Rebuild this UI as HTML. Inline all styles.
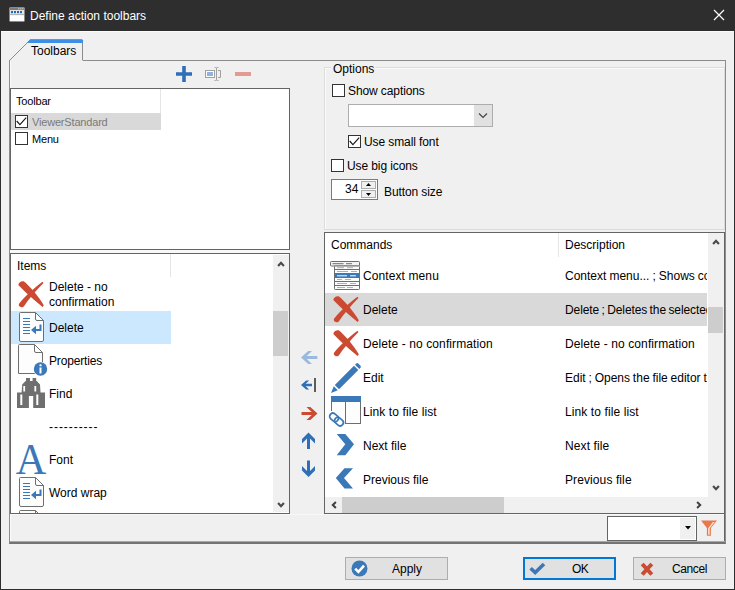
<!DOCTYPE html>
<html><head><meta charset="utf-8"><title>Define action toolbars</title>
<style>
html,body{margin:0;padding:0;}
body{width:735px;height:590px;overflow:hidden;background:#f0f0f0;font-family:"Liberation Sans",sans-serif;font-size:12px;color:#000;position:relative;}
div,span,svg{position:absolute;box-sizing:border-box;}
svg{overflow:visible;}
.t{white-space:nowrap;line-height:14px;height:14px;}
.cb{width:13px;height:13px;border:1px solid #333;background:#fff;}
.clip{overflow:hidden;}
</style></head><body>
<div style="left:0px;top:0px;width:735px;height:590px;background:transparent;border:1px solid #2e2e2e;border-top:0;"></div>
<div style="left:0px;top:0px;width:735px;height:31px;background:#2e2e2e;"></div>
<div style="left:1px;top:31px;width:733px;height:1px;background:#fafafa;"></div>
<svg style="left:9px;top:7px" width="16" height="15" viewBox="0 0 16 15"><rect x="0.500" y="0.500" width="15" height="14" rx="1" fill="#fdfdfd" stroke="#8a8a8a"/><rect x="1" y="1" width="14" height="2" fill="#7c7c7c"/><rect x="9.300" y="1.300" width="1" height="1" fill="#eee"/><rect x="11.300" y="1.300" width="1" height="1" fill="#eee"/><rect x="13.300" y="1.300" width="1" height="1" fill="#eee"/><rect x="1" y="3" width="14" height="4.500" fill="#e6e6e6"/><rect x="2" y="4" width="2" height="2.200" fill="#1e6cc0"/><rect x="5" y="4" width="2" height="2.200" fill="#1e6cc0"/><rect x="8" y="4" width="2" height="2.200" fill="#1e6cc0"/><rect x="11" y="4" width="2" height="2.200" fill="#1e6cc0"/><rect x="1" y="7.300" width="14" height="0.800" fill="#9a9a9a"/></svg>
<span class="t" style="left:30px;top:9px;color:#fff;">Define action toolbars</span>
<svg style="left:713px;top:9px" width="12" height="12" viewBox="0 0 12 12"><path d="M1 1L11 11M11 1L1 11" stroke="#fff" stroke-width="1.200" fill="none"/></svg>
<div style="left:9px;top:60px;width:717px;height:484px;background:transparent;border:1px solid #8c8c8c;border-bottom:2px solid #747474;"></div>
<div style="left:724px;top:514px;width:1px;height:28px;background:#646464;"></div>
<div style="left:10px;top:541px;width:715px;height:1px;background:#a8a8a8;"></div>
<div style="left:10px;top:61px;width:1px;height:480px;background:#fcfcfc;"></div>
<svg style="left:9px;top:38px" width="80" height="24" viewBox="0 0 80 24"><path d="M0.500 22.500 L21 2 L73.500 2 L73.500 22.500" fill="#f0f0f0" stroke="#8c8c8c"/><rect x="1" y="22" width="72.500" height="2" fill="#f0f0f0"/><rect x="0" y="22" width="1" height="2" fill="#8c8c8c"/><path d="M21.200 1.300 L72.800 1.300 L74 2.500 L74 4.900 L17.700 4.900 Z" fill="#3c8ee6"/></svg>
<span class="t" style="left:31px;top:44px;">Toolbars</span>
<svg style="left:176px;top:66px" width="16" height="16" viewBox="0 0 16 16"><path d="M6.200 0h3.600v6.200H16v3.600H9.800V16H6.200V9.800H0V6.200h6.200z" fill="#2e6fb7"/></svg>
<svg style="left:205px;top:67px" width="17" height="14" viewBox="0 0 17 14"><rect x="0.500" y="3.500" width="9" height="7" fill="#fff" stroke="#a0a0a0"/><rect x="2" y="5" width="6" height="4" fill="#8fb3dc"/><path d="M9.500 0.500h1q1 0 1 1v11q0 1 -1 1h-1M13.500 0.500h-1q-1 0 -1 1v11q0 1 1 1h1" stroke="#a0a0a0" fill="none"/><path d="M13 3.500h2.500v7H13" stroke="#a0a0a0" fill="none"/></svg>
<div style="left:235px;top:72px;width:16px;height:4px;background:#e19b90;"></div>
<div style="left:10px;top:88px;width:280px;height:162px;background:#fff;border:1px solid #646464;"></div>
<div style="left:11px;top:250px;width:278px;height:3px;background:#f8f8f8;"></div>
<div style="left:160px;top:89px;width:1px;height:24px;background:#e5e5e5;"></div>
<span class="t" style="left:16px;top:94px;font-size:11px;letter-spacing:-0.18px;">Toolbar</span>
<div style="left:11px;top:113px;width:150px;height:17px;background:#d9d9d9;"></div>
<div class="cb" style="left:15px;top:115px;"></div><svg style="left:15px;top:115px" width="13" height="13" viewBox="0 0 13 13"><path d="M1.700 6L4.900 9.700L11.200 2.600" stroke="#1a1a1a" stroke-width="1.200" fill="none"/></svg>
<span class="t" style="left:32px;top:115px;font-size:11px;color:#7a7a7a;letter-spacing:-0.18px;">ViewerStandard</span>
<div class="cb" style="left:15px;top:132px;"></div>
<span class="t" style="left:32px;top:132px;font-size:11px;letter-spacing:-0.18px;">Menu</span>
<div style="left:10px;top:253px;width:280px;height:261px;background:#fff;border:1px solid #646464;"></div>
<div style="left:170px;top:254px;width:1px;height:23px;background:#e5e5e5;"></div>
<span class="t" style="left:17px;top:259px;">Items</span>
<div style="left:11px;top:311px;width:160px;height:33px;background:#cce8ff;"></div>
<svg style="left:18px;top:281px" width="27" height="27" viewBox="0 0 27 27"><path d="M0.300 3.900 C0.400 1.500 3.500 -0.300 5.700 0.300 C11 4.500 20.500 15 25.800 24.300 L24.600 26 C18 20.500 6.500 10.500 0.300 3.900 Z" fill="#cb4a32"/><path d="M24.500 0.800 L25.500 2.100 C18.500 9 11 18 6.200 25 C5.200 26.500 3 26.600 1.700 25.600 C0.600 24.600 0.600 23.200 1.200 22.400 C7 15.500 15.500 7.500 24.500 0.800 Z" fill="#cb4a32"/></svg>
<svg style="left:19px;top:312px" width="25" height="30" viewBox="0 0 25 30"><path d="M1.500 0.500 H16.500 L24.500 8.500 V28 Q24.500 29.500 23 29.500 H2 Q0.500 29.500 0.500 28 V1.500 Q0.500 0.500 1.500 0.500 Z" fill="#fdfdfd" stroke="#6e6e6e"/><path d="M16.500 0.500 V7 Q16.500 8.500 18 8.500 H24.500" fill="none" stroke="#6e6e6e"/><path d="M4 6.500h7M4 9.500h7M4 12.500h7M4 15.500h7M4 18.500h7M4 21.500h7" stroke="#3b78b8" stroke-width="1.100"/><path d="M21.500 12.500 V18 H14.500" fill="none" stroke="#3b78b8" stroke-width="2"/><path d="M12 18 L17 13.800 V22.200 Z" fill="#3b78b8"/></svg>
<svg style="left:18px;top:344px" width="32" height="32" viewBox="0 0 32 32"><path d="M1.500 0.500 H16.500 L24.500 8.500 V29.500 H0.500 V1.500 Q0.500 0.500 1.500 0.500 Z" fill="#fdfdfd" stroke="#6e6e6e"/><path d="M16.500 0.500 V7 Q16.500 8.500 18 8.500 H24.500" fill="none" stroke="#6e6e6e"/><circle cx="22.500" cy="25" r="7.300" fill="#fff"/><circle cx="22.500" cy="25" r="6.700" fill="#3b78b8"/><rect x="21.500" y="23.500" width="2" height="6" fill="#fff"/><rect x="21.500" y="20.300" width="2" height="2" fill="#fff"/></svg>
<svg style="left:17px;top:378px" width="28" height="30" viewBox="0 0 28 30"><path d="M9 0h4v3h2.600v-3h3.600v3h0.500L23 6.500L23.500 14.500H28V30H16.200V18h-4.300V30H0V14.500h4.600L5.200 6.500L8.600 3h0.400z" fill="#6f6f6f"/><rect x="3.300" y="16.500" width="2" height="10.500" fill="#fff"/><rect x="19.300" y="16.500" width="2" height="10.500" fill="#fff"/><rect x="6.300" y="8" width="1.800" height="5.500" fill="#fff"/><rect x="17.400" y="8" width="1.800" height="5.500" fill="#fff"/></svg>
<svg style="left:11px;top:439px" width="42" height="40" viewBox="0 0 42 40"><text transform="translate(20 35) scale(0.94 1)" text-anchor="middle" font-family="Liberation Serif, serif" font-size="45" fill="#3b78b8">A</text></svg>
<svg style="left:19px;top:477px" width="25" height="30" viewBox="0 0 25 30"><path d="M1.500 0.500 H16.500 L24.500 8.500 V28 Q24.500 29.500 23 29.500 H2 Q0.500 29.500 0.500 28 V1.500 Q0.500 0.500 1.500 0.500 Z" fill="#fdfdfd" stroke="#6e6e6e"/><path d="M16.500 0.500 V7 Q16.500 8.500 18 8.500 H24.500" fill="none" stroke="#6e6e6e"/><path d="M4 6.500h7M4 9.500h7M4 12.500h7M4 15.500h7M4 18.500h7M4 21.500h7" stroke="#3b78b8" stroke-width="1.100"/><path d="M21.500 12.500 V18 H14.500" fill="none" stroke="#3b78b8" stroke-width="2"/><path d="M12 18 L17 13.800 V22.200 Z" fill="#3b78b8"/></svg>
<div class="clip" style="left:11px;top:505px;width:60px;height:8px;"><svg style="left:8px;top:5px" width="25" height="30" viewBox="0 0 25 30"><path d="M1.500 0.500 H16.500 L24.500 8.500 V28 Q24.500 29.500 23 29.500 H2 Q0.500 29.500 0.500 28 V1.500 Q0.500 0.500 1.500 0.500 Z" fill="#fdfdfd" stroke="#6e6e6e"/><path d="M16.500 0.500 V7 Q16.500 8.500 18 8.500 H24.500" fill="none" stroke="#6e6e6e"/><path d="M4 6.500h7M4 9.500h7M4 12.500h7M4 15.500h7M4 18.500h7M4 21.500h7" stroke="#3b78b8" stroke-width="1.100"/><path d="M21.500 12.500 V18 H14.500" fill="none" stroke="#3b78b8" stroke-width="2"/><path d="M12 18 L17 13.800 V22.200 Z" fill="#3b78b8"/></svg></div>
<span class="t" style="left:49px;top:280px;">Delete - no</span>
<span class="t" style="left:49px;top:295px;">confirmation</span>
<span class="t" style="left:49px;top:321px;">Delete</span>
<span class="t" style="left:49px;top:354px;letter-spacing:-0.15px;">Properties</span>
<span class="t" style="left:49px;top:387px;">Find</span>
<span class="t" style="left:49px;top:420px;letter-spacing:0.95px;">----------</span>
<span class="t" style="left:49px;top:453px;">Font</span>
<span class="t" style="left:49px;top:486px;">Word wrap</span>
<div style="left:273px;top:255px;width:16px;height:257px;background:#f0f0f0;"></div>
<div style="left:273px;top:311px;width:15px;height:45px;background:#cdcdcd;"></div>
<svg style="left:274.5px;top:257.5px" width="12" height="12" viewBox="-6 -6 12 12"><path d="M-2.900 1.900L0 -1.200L2.900 1.900" fill="none" stroke="#4a4a4a" stroke-width="2.2"/></svg>
<svg style="left:274.5px;top:499px" width="12" height="12" viewBox="-6 -6 12 12"><path d="M-2.900 -1.900L0 1.200L2.900 -1.900" fill="none" stroke="#4a4a4a" stroke-width="2.2"/></svg>
<svg style="left:301px;top:350px" width="17" height="15" viewBox="0 0 17 15"><path d="M0 7.500L7.200 1H11L5.800 5.900H16.300V9.100H5.800L11 14H7.200Z" fill="#9bb9dc"/></svg>
<svg style="left:301px;top:377px" width="17" height="16" viewBox="0 0 17 16"><path d="M0 8L5.200 3.500H8.200L4.600 6.800H11V9.200H4.600L8.200 12.500H5.200Z" fill="#2e6fb7"/><rect x="13" y="1" width="2" height="14" fill="#5c5c5c"/></svg>
<svg style="left:301px;top:406px" width="17" height="15" viewBox="0 0 17 15"><path d="M16.500 7.500L9.300 1H5.500L10.700 5.900H0.500V9.100H10.700L5.500 14H9.300Z" fill="#cb4a32"/></svg>
<svg style="left:301px;top:432px" width="15" height="18" viewBox="0 0 15 18"><path d="M7.500 0.500L14 7V11.500L9 6.500V17H6V6.500L1 11.500V7Z" fill="#2e6fb7"/></svg>
<svg style="left:301px;top:460px" width="15" height="18" viewBox="0 0 15 18"><path d="M7.500 17L14 10.500V6L9 11V0.500H6V11L1 6V10.500Z" fill="#2e6fb7"/></svg>
<div style="left:324px;top:67px;width:401px;height:163px;background:transparent;border:1px solid #dcdcdc;"></div>
<div style="left:325px;top:68px;width:399px;height:161px;background:transparent;border:1px solid #fbfbfb;border-right:0;border-bottom:0;"></div>
<span class="t" style="left:331px;top:62px;background:#f0f0f0;padding:0 2px;">Options</span>
<div class="cb" style="left:332px;top:84px;"></div>
<span class="t" style="left:348px;top:84px;letter-spacing:-0.1px;">Show captions</span>
<div style="left:348px;top:104px;width:145px;height:23px;background:#fff;border:1px solid #adadad;"></div>
<div style="left:474px;top:105px;width:18px;height:21px;background:#e1e1e1;"></div>
<svg style="left:478px;top:112px" width="10" height="7" viewBox="0 0 10 7"><path d="M1 1.500L5 5.500L9 1.500" fill="none" stroke="#404040" stroke-width="1.100"/></svg>
<div class="cb" style="left:348px;top:135px;"></div><svg style="left:348px;top:135px" width="13" height="13" viewBox="0 0 13 13"><path d="M1.700 6L4.900 9.700L11.200 2.600" stroke="#1a1a1a" stroke-width="1.200" fill="none"/></svg>
<span class="t" style="left:364px;top:135px;letter-spacing:-0.1px;">Use small font</span>
<div class="cb" style="left:331px;top:159px;"></div>
<span class="t" style="left:347px;top:159px;letter-spacing:-0.1px;">Use big icons</span>
<div style="left:331px;top:179px;width:47px;height:21px;background:#fff;border:1px solid #7a7a7a;"></div>
<span class="t" style="left:345px;top:182px;">34</span>
<div style="left:361px;top:181px;width:15px;height:8px;background:#f0f0f0;border:1px solid #adadad;"></div>
<div style="left:361px;top:190px;width:15px;height:8px;background:#f0f0f0;border:1px solid #adadad;"></div>
<svg style="left:366px;top:183px" width="5" height="3" viewBox="0 0 5 3"><path d="M0 3L2.500 0L5 3Z" fill="#000"/></svg>
<svg style="left:366px;top:193px" width="5" height="3" viewBox="0 0 5 3"><path d="M0 0L2.500 3L5 0Z" fill="#000"/></svg>
<span class="t" style="left:384px;top:185px;letter-spacing:-0.1px;">Button size</span>
<div style="left:324px;top:232px;width:401px;height:282px;background:#fff;border:1px solid #646464;"></div>
<div style="left:558px;top:233px;width:1px;height:24px;background:#e5e5e5;"></div>
<span class="t" style="left:331px;top:238px;">Commands</span>
<span class="t" style="left:565px;top:238px;">Description</span>
<div style="left:325px;top:293px;width:382px;height:33px;background:#d9d9d9;"></div>
<svg style="left:329px;top:261px" width="32" height="30" viewBox="0 0 32 30"><rect x="1.500" y="0.500" width="29" height="4.500" rx="0.800" fill="#f4f4f4" stroke="#6e6e6e"/><rect x="5.500" y="5" width="25" height="23.500" rx="0.800" fill="#fdfdfd" stroke="#6e6e6e"/><path d="M5.500 8.500H30.500M5.500 12.500H30.500M5.500 16.500H30.500M5.500 20.500H30.500M5.500 24.500H30.500" stroke="#6e6e6e" stroke-width="1"/><rect x="6" y="13" width="24" height="4" fill="#3b78b8"/><path d="M3.500 2.700h11M17 2.700h6" stroke="#6e6e6e" stroke-width="1"/><path d="M8 6.700h7M18 6.700h6M8 10.500h11M22 10.500h6M8 18.500h5M16 18.500h6M8 22.500h10M21 22.500h6M8 26.500h8M18 26.500h6" stroke="#b0b0b0" stroke-width="1"/><path d="M8 14.800h10M21 14.800h6" stroke="#fff" stroke-width="1"/></svg>
<svg style="left:332.5px;top:296px" width="27" height="27" viewBox="0 0 27 27"><path d="M0.300 3.900 C0.400 1.500 3.500 -0.300 5.700 0.300 C11 4.500 20.500 15 25.800 24.300 L24.600 26 C18 20.500 6.500 10.500 0.300 3.900 Z" fill="#cb4a32"/><path d="M24.500 0.800 L25.500 2.100 C18.500 9 11 18 6.200 25 C5.200 26.500 3 26.600 1.700 25.600 C0.600 24.600 0.600 23.200 1.200 22.400 C7 15.500 15.500 7.500 24.500 0.800 Z" fill="#cb4a32"/></svg>
<svg style="left:332.5px;top:330px" width="27" height="27" viewBox="0 0 27 27"><path d="M0.300 3.900 C0.400 1.500 3.500 -0.300 5.700 0.300 C11 4.500 20.500 15 25.800 24.300 L24.600 26 C18 20.500 6.500 10.500 0.300 3.900 Z" fill="#cb4a32"/><path d="M24.500 0.800 L25.500 2.100 C18.500 9 11 18 6.200 25 C5.200 26.500 3 26.600 1.700 25.600 C0.600 24.600 0.600 23.200 1.200 22.400 C7 15.500 15.500 7.500 24.500 0.800 Z" fill="#cb4a32"/></svg>
<svg style="left:329px;top:362px" width="33" height="32" viewBox="0 0 33 32"><path d="M2 31 L4.800 24.200 L8.800 28.200 Z" fill="#3b78b8"/><path d="M5.800 23 L25 3.800 L29.300 8.100 L10.100 27.300 Z" fill="#3b78b8"/><path d="M26 2.800 L27.300 1.500 Q28.300 0.700 29.300 1.500 L31.500 3.800 Q32.300 4.800 31.500 5.800 L30.300 7.100 Z" fill="#3b78b8"/></svg>
<svg style="left:328px;top:395px" width="34" height="32" viewBox="0 0 34 32"><rect x="3.500" y="1.500" width="29" height="27" fill="#fdfdfd" stroke="#6e6e6e"/><rect x="3" y="1" width="30" height="6" fill="#3b78b8"/><path d="M17.500 7V28.500" stroke="#6e6e6e"/><rect x="0" y="16" width="17" height="16" fill="#fff"/><g fill="none" stroke="#3b78b8" stroke-width="1.700" transform="rotate(40 8.500 24.500)"><rect x="0.500" y="21.300" width="9.500" height="6.400" rx="3.200"/><rect x="7" y="21.300" width="9.500" height="6.400" rx="3.200"/></g></svg>
<svg style="left:336px;top:433px" width="19" height="23" viewBox="0 0 19 23"><path d="M0.700 0.900H9.300L18 11.300L9.300 22.200H0.700L9.300 11.300Z" fill="#3b78b8"/></svg>
<svg style="left:335px;top:467px" width="19" height="23" viewBox="0 0 19 23"><path d="M18 1.200H9.500L0.800 11.100L9.500 21.500H18L9 11.100Z" fill="#3b78b8"/></svg>
<span class="t" style="left:363px;top:269px;letter-spacing:0.1px;">Context menu</span>
<span class="t" style="left:363px;top:303px;">Delete</span>
<span class="t" style="left:363px;top:337px;letter-spacing:0.1px;">Delete - no confirmation</span>
<span class="t" style="left:363px;top:371px;">Edit</span>
<span class="t" style="left:363px;top:405px;letter-spacing:0.1px;">Link to file list</span>
<span class="t" style="left:363px;top:439px;">Next file</span>
<span class="t" style="left:363px;top:473px;">Previous file</span>
<div class="clip" style="left:565px;top:258px;width:142px;height:239px;">
<span class="t" style="left:0px;top:11px;word-spacing:-0.3px;">Context menu... ; Shows context</span>
<span class="t" style="left:0px;top:45px;word-spacing:-0.8px;letter-spacing:-0.1px;">Delete ; Deletes the selected</span>
<span class="t" style="left:0px;top:79px;letter-spacing:0.1px;">Delete - no confirmation</span>
<span class="t" style="left:0px;top:113px;word-spacing:-0.5px;">Edit ; Opens the file editor to</span>
<span class="t" style="left:0px;top:147px;letter-spacing:0.1px;">Link to file list</span>
<span class="t" style="left:0px;top:181px;letter-spacing:0.1px;">Next file</span>
<span class="t" style="left:0px;top:215px;letter-spacing:0.1px;">Previous file</span>
</div>
<div style="left:708px;top:233px;width:16px;height:280px;background:#f0f0f0;"></div>
<div style="left:325px;top:497px;width:399px;height:16px;background:#f0f0f0;"></div>
<div style="left:708px;top:307px;width:15px;height:26px;background:#cdcdcd;"></div>
<div style="left:342px;top:497px;width:162px;height:16px;background:#cdcdcd;"></div>
<div style="left:10px;top:514px;width:714px;height:1px;background:#f8f8f8;"></div>
<svg style="left:709.5px;top:235.5px" width="12" height="12" viewBox="-6 -6 12 12"><path d="M-2.900 1.900L0 -1.200L2.900 1.900" fill="none" stroke="#4a4a4a" stroke-width="2.2"/></svg>
<svg style="left:709.5px;top:482px" width="12" height="12" viewBox="-6 -6 12 12"><path d="M-2.900 -1.900L0 1.200L2.900 -1.900" fill="none" stroke="#4a4a4a" stroke-width="2.2"/></svg>
<svg style="left:327.5px;top:498.5px" width="12" height="12" viewBox="-6 -6 12 12"><path d="M1.900 -2.900L-1.200 0L1.900 2.900" fill="none" stroke="#404040" stroke-width="2"/></svg>
<svg style="left:693px;top:498.5px" width="12" height="12" viewBox="-6 -6 12 12"><path d="M-1.900 -2.900L1.200 0L-1.900 2.900" fill="none" stroke="#404040" stroke-width="2"/></svg>
<div style="left:607px;top:516px;width:90px;height:25px;background:#fff;border:1px solid #646464;"></div>
<div style="left:680px;top:518px;width:15px;height:21px;background:#f0f0f0;"></div>
<svg style="left:685px;top:526px" width="6" height="4" viewBox="0 0 6 4"><path d="M0 0H6L3 3.500Z" fill="#000"/></svg>
<svg style="left:701px;top:520px" width="16" height="16" viewBox="0 0 16 16"><path d="M0 0.500H16L9.900 8V15.800H5.900V8Z" fill="#e8794a"/><path d="M13.600 2L8.600 8.300V14.800H7.200V8.200L12 2Z" fill="#fdeee6"/></svg>
<div style="left:345px;top:557px;width:103px;height:23px;background:#e1e1e1;border:1px solid #adadad;"></div>
<svg style="left:351px;top:560px" width="17" height="17" viewBox="0 0 17 17"><circle cx="8.500" cy="8.500" r="8" fill="#3b78b8"/><path d="M4.200 8.700L7.400 11.900L13 5.700" fill="none" stroke="#fff" stroke-width="2.600"/></svg>
<span class="t" style="left:392px;top:562px;">Apply</span>
<div style="left:523px;top:557px;width:93px;height:23px;background:#e1e1e1;border:2px solid #0078d7;"></div>
<svg style="left:529px;top:561px" width="18" height="15" viewBox="0 0 18 15"><path d="M1.600 7.200L6.200 11.600L15 3" fill="none" stroke="#3b78b8" stroke-width="3.600"/></svg>
<span class="t" style="left:572px;top:562px;letter-spacing:-0.5px;">OK</span>
<div style="left:633px;top:557px;width:93px;height:23px;background:#e1e1e1;border:1px solid #adadad;"></div>
<svg style="left:640px;top:561px" width="14" height="15" viewBox="0 0 14 15"><path d="M2.200 3L11.800 13.500M11.800 3L2.200 13.500" fill="none" stroke="#cb4a32" stroke-width="4"/></svg>
<span class="t" style="left:672px;top:562px;letter-spacing:-0.4px;">Cancel</span>
</body></html>
